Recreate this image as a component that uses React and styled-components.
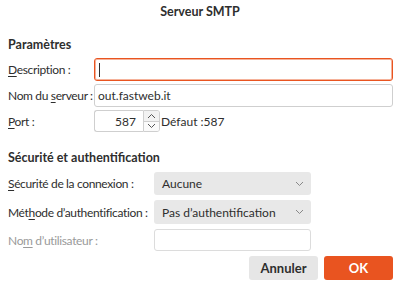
import styled, { createGlobalStyle } from "styled-components";

const GlobalStyle = createGlobalStyle`
    html, body {
        margin: 0;
        padding: 0;
        background: #fff;
    }
    body {
        font-family: Lato, "Noto Sans", sans-serif;
        font-size: 12px;
        color: #2e2e2e;
    }
`;

const App = () => {
    return (
        <>
            <GlobalStyle />
            <Dialog>
                <TitleBar>Serveur SMTP</TitleBar>

                <SectionTitle>Paramètres</SectionTitle>
                <ParamGrid>
                    <Label><u>D</u>escription :</Label>
                    <TextInput focused><Caret /></TextInput>

                    <Label>Nom du <u>s</u>erveur :</Label>
                    <TextInput>out.fastweb.it</TextInput>

                    <Label><u>P</u>ort :</Label>
                    <PortRow>
                        <SpinValue>587</SpinValue>
                        <SpinButtons>
                            <SpinBtn>
                                <svg width="9" height="6" viewBox="0 0 9 6">
                                    <path d="M1 5 L4.5 1.5 L8 5" fill="none" stroke="#555" strokeWidth="1" />
                                </svg>
                            </SpinBtn>
                            <SpinBtn>
                                <svg width="9" height="6" viewBox="0 0 9 6">
                                    <path d="M1 1 L4.5 4.5 L8 1" fill="none" stroke="#555" strokeWidth="1" />
                                </svg>
                            </SpinBtn>
                        </SpinButtons>
                        <DefaultText>Défaut :587</DefaultText>
                    </PortRow>
                </ParamGrid>

                <SectionTitle className="second">Sécurité et authentification</SectionTitle>
                <SecurityGrid>
                    <Label><u>S</u>écurité de la connexion :</Label>
                    <Select>
                        <span>Aucune</span>
                        <Chevron />
                    </Select>

                    <Label>Mét<u>h</u>ode d’authentification :</Label>
                    <Select>
                        <span>Pas d’authentification</span>
                        <Chevron />
                    </Select>

                    <Label disabled>No<u>m</u> d’utilisateur :</Label>
                    <TextInput disabled />
                </SecurityGrid>

                <Footer>
                    <Button>Annuler</Button>
                    <Button primary>OK</Button>
                </Footer>
            </Dialog>
        </>
    );
};

const Chevron = () => (
    <svg width="9" height="6" viewBox="0 0 9 6">
        <path d="M1 1 L4.5 4.5 L8 1" fill="none" stroke="#888" strokeWidth="1" />
    </svg>
);

const Dialog = styled.div`
    width: 400px;
    height: 281px;
    box-sizing: border-box;
    padding: 0 6px 0 8px;
    display: flex;
    flex-direction: column;
    overflow: hidden;
`;

const TitleBar = styled.div`
    height: 24px;
    line-height: 24px;
    text-align: center;
    font-weight: bold;
    font-size: 12.5px;
    color: #2e2e2e;
    margin-right: -6px;
    margin-left: -8px;
`;

const SectionTitle = styled.div`
    font-weight: bold;
    font-size: 12.5px;
    height: 20px;
    line-height: 20px;
    margin-top: 11px;
    margin-bottom: 3px;

    &.second {
        margin-top: 16px;
        margin-bottom: 4px;
    }
`;

const ParamGrid = styled.div`
    display: grid;
    grid-template-columns: 86px 299px;
    grid-template-rows: 23px 23px 22px;
    row-gap: 3px;
    align-items: center;
`;

const SecurityGrid = styled.div`
    display: grid;
    grid-template-columns: 146px 157px;
    grid-template-rows: 23px 24px 22px;
    row-gap: 5px;
    align-items: center;
`;

const Label = styled.div`
    white-space: nowrap;
    letter-spacing: -0.35px;
    color: ${(p) => (p.disabled ? "#9a9a9a" : "#2e2e2e")};

    u {
        text-decoration-thickness: 1px;
        text-underline-offset: 2px;
    }
`;

const TextInput = styled.div`
    box-sizing: border-box;
    height: 100%;
    display: flex;
    align-items: center;
    padding: 0 3px;
    background: #fff;
    border: 1px solid ${(p) => (p.focused ? "#e95420" : p.disabled ? "#dcdcdc" : "#cfcfcf")};
    box-shadow: ${(p) => (p.focused ? "inset 0 0 0 1px rgba(233,84,32,0.45)" : "none")};
    border-radius: 3px;
    color: #2e2e2e;
`;

const Caret = styled.span`
    width: 1px;
    height: 14px;
    margin-left: 1px;
    background: #2e2e2e;
`;

const PortRow = styled.div`
    display: flex;
    align-items: center;
    height: 100%;
`;

const SpinValue = styled.div`
    box-sizing: border-box;
    width: 49px;
    height: 22px;
    border: 1px solid #cfcfcf;
    border-right: none;
    border-radius: 3px 0 0 3px;
    display: flex;
    align-items: center;
    justify-content: flex-end;
    padding-right: 7px;
`;

const SpinButtons = styled.div`
    box-sizing: border-box;
    width: 17px;
    height: 22px;
    border: 1px solid #cfcfcf;
    border-radius: 0 3px 3px 0;
    display: flex;
    flex-direction: column;
    overflow: hidden;
`;

const SpinBtn = styled.div`
    flex: 1;
    display: flex;
    align-items: center;
    justify-content: center;
    background: #f2f2f2;

    & + & {
        border-top: 1px solid #cfcfcf;
        background: #fafafa;
    }
`;

const DefaultText = styled.span`
    margin-left: 1px;
`;

const Select = styled.div`
    box-sizing: border-box;
    height: 100%;
    display: flex;
    align-items: center;
    justify-content: space-between;
    padding: 0 7px 0 8px;
    background: #e8e8e8;
    border-radius: 3px;
`;

const Footer = styled.div`
    display: flex;
    justify-content: flex-end;
    gap: 6px;
    margin-top: 5px;
    padding-right: 1px;
`;

const Button = styled.button`
    font-family: inherit;
    font-size: 13px;
    font-weight: bold;
    height: 24px;
    width: 69px;
    border: none;
    border-radius: 3px;
    background: ${(p) => (p.primary ? "#e95420" : "#e6e6e6")};
    color: ${(p) => (p.primary ? "#fff" : "#2e2e2e")};
    padding: 0;
`;

export default App;
